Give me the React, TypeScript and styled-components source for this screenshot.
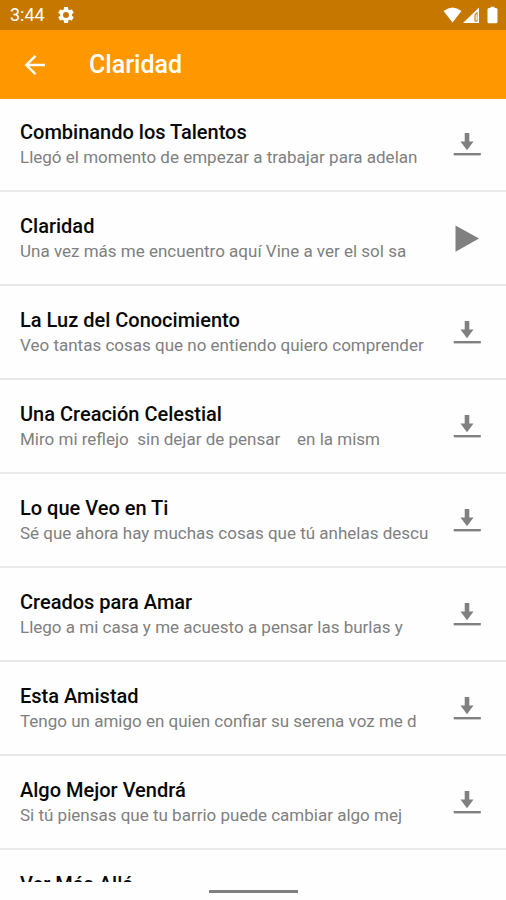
import styled, { createGlobalStyle } from 'styled-components';

const GlobalStyle = createGlobalStyle`
  * {
    box-sizing: border-box;
  }

  body {
    margin: 0;
    background: #fefefe;
    font-family: Roboto, 'Liberation Sans', sans-serif;
  }
`;

const Screen = styled.div`
  display: flex;
  flex-direction: column;
  height: 100vh;
  overflow: hidden;
`;

const StatusBar = styled.div`
  display: flex;
  flex: none;
  align-items: center;
  justify-content: space-between;
  height: 30px;
  padding: 0 8px 0 10px;
  background: #c67700;
  color: #fff;
`;

const StatusGroup = styled.div`
  display: flex;
  align-items: center;
  gap: 13px;
`;

const Clock = styled.span`
  font-size: 18px;
  line-height: 32px;
`;

const AppBar = styled.header`
  display: flex;
  flex: none;
  align-items: center;
  gap: 35px;
  height: 68px;
  padding: 2px 16px 0;
  background: #ff9800;
  box-shadow: 0 1px 0 #ff9800;
  color: #fff;
`;

const IconButton = styled.button`
  display: flex;
  align-items: center;
  justify-content: center;
  flex: none;
  width: 38px;
  height: 38px;
  padding: 0;
  border: none;
  background: transparent;
  color: inherit;
  cursor: pointer;
`;

const PageTitle = styled.h1`
  margin: 0;
  font-size: 25px;
  font-weight: 500;
  line-height: 32px;
`;

const SongList = styled.ul`
  flex: 1;
  min-height: 0;
  margin: 0;
  padding: 0;
  overflow: hidden;
  list-style: none;
`;

const SongRow = styled.li`
  display: flex;
  align-items: center;
  justify-content: space-between;
  height: 94px;
  padding: 0 20px;
  border-bottom: 2px solid #e8e8e8;
`;

const SongText = styled.div`
  min-width: 0;
`;

const SongTitle = styled.h2`
  margin: 0;
  color: #080808;
  font-size: 20px;
  font-weight: 500;
  line-height: 26px;
`;

const SongLyric = styled.p`
  min-height: 24px;
  margin: 0;
  color: #808080;
  font-size: 17px;
  line-height: 24px;
  white-space: pre;
`;

const SongAction = styled(IconButton)`
  color: #808080;
`;

const GestureBar = styled.footer`
  display: flex;
  flex: none;
  align-items: center;
  justify-content: center;
  height: 18px;
  padding-top: 1px;
`;

const Handle = styled.div`
  width: 89px;
  height: 3px;
  background: #808080;
`;

type Song = {
  title: string;
  lyric?: string;
  downloaded?: boolean;
};

const songs: Song[] = [
  { title: 'Combinando los Talentos', lyric: 'Llegó el momento de empezar a trabajar para adelan' },
  { title: 'Claridad', lyric: 'Una vez más me encuentro aquí Vine a ver el sol sa', downloaded: true },
  { title: 'La Luz del Conocimiento', lyric: 'Veo tantas cosas que no entiendo quiero comprender' },
  { title: 'Una Creación Celestial', lyric: 'Miro mi reflejo  sin dejar de pensar    en la mism' },
  { title: 'Lo que Veo en Ti', lyric: 'Sé que ahora hay muchas cosas que tú anhelas descu' },
  { title: 'Creados para Amar', lyric: 'Llego a mi casa y me acuesto a pensar las burlas y' },
  { title: 'Esta Amistad', lyric: 'Tengo un amigo en quien confiar su serena voz me d' },
  { title: 'Algo Mejor Vendrá', lyric: 'Si tú piensas que tu barrio puede cambiar algo mej' },
  { title: 'Ver Más Allá' },
];

const GearIcon = () => (
  <svg width="16" height="16" viewBox="2.3 2.3 19.4 19.4" fill="currentColor" aria-hidden="true">
    <path d="M19.14 12.94c.04-.3.06-.61.06-.94s-.02-.64-.07-.94l2.03-1.58a.49.49 0 0 0 .12-.61l-1.92-3.32a.49.49 0 0 0-.59-.22l-2.39.96a7 7 0 0 0-1.62-.94l-.36-2.54A.48.48 0 0 0 13.92 2.4h-3.84c-.24 0-.43.17-.47.41l-.36 2.54c-.59.24-1.13.57-1.62.94l-2.39-.96a.48.48 0 0 0-.59.22L2.74 8.87c-.12.21-.08.47.12.61l2.03 1.58c-.05.3-.09.63-.09.94s.02.64.07.94l-2.03 1.58a.49.49 0 0 0-.12.61l1.92 3.32c.12.22.37.29.59.22l2.39-.96c.5.38 1.03.7 1.62.94l.36 2.54c.05.24.24.41.48.41h3.84c.24 0 .44-.17.47-.41l.36-2.54a7 7 0 0 0 1.62-.94l2.39.96c.22.08.47 0 .59-.22l1.92-3.32a.49.49 0 0 0-.12-.61zM12 15.6A3.6 3.6 0 1 1 12 8.4a3.6 3.6 0 0 1 0 7.2" />
  </svg>
);

const SignalIcons = () => (
  <svg width="55" height="18" viewBox="0 0 55 18" fill="#fff" aria-hidden="true">
    <path d="M0.5 5Q9.5-2 18.5 5L9.5 16.5Z" />
    <path fillRule="evenodd" d="M20 17L36 1.5V17ZM31.5 8.5V15.5H34.5V5.5Z" />
    <path d="M32.6 8.5H33.8V14.5H32.6Z" />
    <path d="M47.5 0.8H51.5V2H53Q54.5 2 54.5 3.5V15.8Q54.5 17.3 53 17.3H46Q44.5 17.3 44.5 15.8V3.5Q44.5 2 46 2H47.5Z" />
  </svg>
);

const BackIcon = () => (
  <svg width="22" height="22" viewBox="0 0 22 22" fill="none" stroke="currentColor" strokeWidth="2.4" aria-hidden="true">
    <path d="M21 11H3M11.5 1.8L2.3 11l9.2 9.2" />
  </svg>
);

const DownloadIcon = () => (
  <svg width="28" height="24" viewBox="0 0 28 24" fill="currentColor" aria-hidden="true">
    <path d="M11.7 1h4.6v8.6h4.2L14 18.2 7.5 9.6h4.2z" />
    <path d="M0.7 21h27.1v2.4H0.7z" />
  </svg>
);

const PlayIcon = () => (
  <svg width="28" height="28" viewBox="0 0 28 28" fill="currentColor" aria-hidden="true">
    <path d="M2.5 1.4L26 14.6 2.5 27.8z" />
  </svg>
);

export default function App() {
  return (
    <>
      <GlobalStyle />
      <Screen>
        <StatusBar>
          <StatusGroup>
            <Clock>3:44</Clock>
            <GearIcon />
          </StatusGroup>
          <SignalIcons />
        </StatusBar>
        <AppBar>
          <IconButton aria-label="Volver">
            <BackIcon />
          </IconButton>
          <PageTitle>Claridad</PageTitle>
        </AppBar>
        <SongList>
          {songs.map((song) => (
            <SongRow key={song.title}>
              <SongText>
                <SongTitle>{song.title}</SongTitle>
                <SongLyric>{song.lyric}</SongLyric>
              </SongText>
              <SongAction aria-label={song.downloaded ? 'Reproducir' : 'Descargar'}>
                {song.downloaded ? <PlayIcon /> : <DownloadIcon />}
              </SongAction>
            </SongRow>
          ))}
        </SongList>
        <GestureBar>
          <Handle />
        </GestureBar>
      </Screen>
    </>
  );
}
